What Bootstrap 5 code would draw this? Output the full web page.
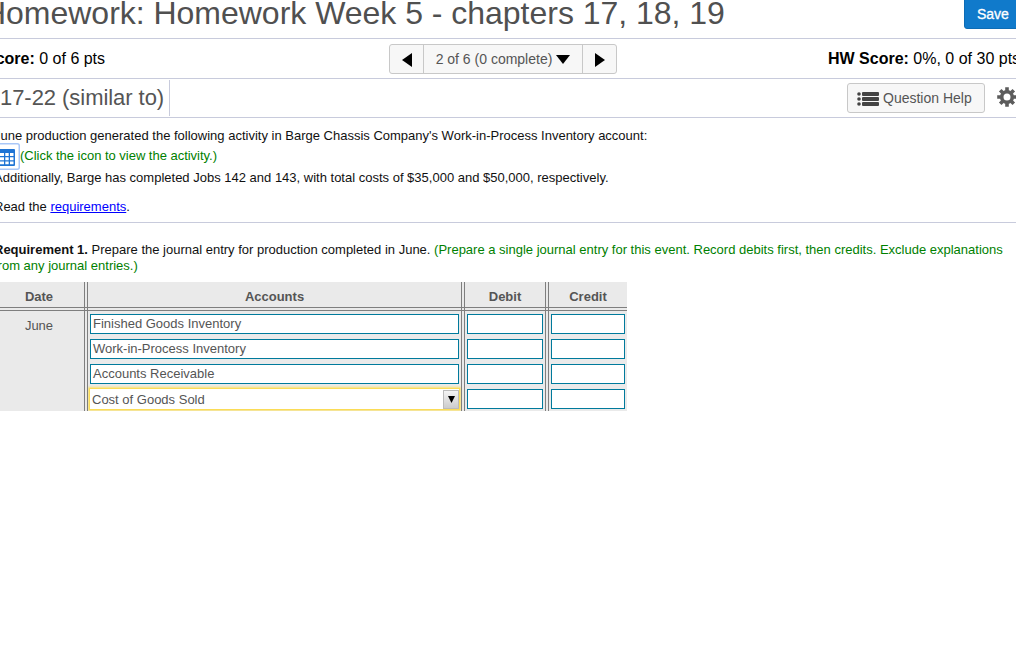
<!DOCTYPE html>
<html lang="en">
<head>
  <meta charset="UTF-8">
  <meta name="viewport" content="width=device-width, initial-scale=1.0">
  <title>Homework Week 5</title>
  <link href="https://cdn.jsdelivr.net/npm/bootstrap@5.3.0/dist/css/bootstrap.min.css" rel="stylesheet">
  <style>
    body {
      font-family: "Liberation Sans", Arial, sans-serif;
      font-size: 13px;
      line-height: 16px;
      color: #111;
      background-color: #fff;
      overflow: hidden;
    }
    /* the page is wider than the window on both sides */
    .hw-page {
      margin-left: -8px;
      width: 1044px;
    }
    .hw-line {
      border-bottom: 1px solid #c8cbdc;
    }
    .title-bar {
      height: 39px;
    }
    .title-bar h1 {
      font-size: 32px;
      line-height: 38px;
      margin-top: -6px;
      margin-left: -9px;
      letter-spacing: -.02px;
      color: #505050;
      font-weight: 400;
    }
    .btn-save {
      width: 80px;
      height: 33px;
      margin-top: -4px;
      margin-right: -8px;
      padding: 4px 0 0 12px;
      text-align: left;
      background-color: #107acb;
      border-color: #0d6cb5;
      border-radius: 3px;
      color: #fff;
      font-size: 14px;
      -webkit-text-stroke: .3px #fff;
    }
    .score-bar {
      height: 40px;
      font-size: 16px;
      color: #000;
    }
    .score-left {
      width: 404px;
      margin-left: -7px;
    }
    .hw-score {
      margin-left: 211px;
    }
    .grey-box {
      background-color: #f7f7f7;
      border: 1px solid #c8c8c8;
      border-radius: 3px;
      color: #555;
      font-size: 14px;
    }
    .pager {
      width: 228px;
      height: 30px;
    }
    .pager svg {
      margin-top: 2px;
    }
    .pager-arrow {
      width: 33px;
    }
    .pager-mid {
      width: 160px;
      border-left: 1px solid #c8c8c8;
      border-right: 1px solid #c8c8c8;
    }
    .question-bar {
      height: 39px;
    }
    .question-name {
      width: 178px;
      height: 36px;
      border-right: 1px solid #c8cbdc;
      font-size: 22px;
      line-height: 35px;
      letter-spacing: -.05px;
      color: #555;
      padding-left: 8px;
    }
    .btn-help {
      width: 138px;
      height: 30px;
      margin-left: 677px;
      padding: 0 0 0 9px;
    }
    .btn-help svg {
      margin-top: 2px;
    }
    .gear {
      margin: 0 0 2px 12px;
    }
    .intro {
      height: 105px;
      padding-top: 10px;
    }
    .intro p, .task p {
      margin: 0 0 0 2px;
      white-space: nowrap;
    }
    .intro .hint {
      margin-left: 0;
      letter-spacing: -.02px;
    }
    .data-icon {
      display: block;
      margin: -1px 0 0 5px;
    }
    .intro .read-line {
      margin-top: 13px;
    }
    .hint {
      color: #008000;
    }
    .intro a {
      color: #00f;
    }
    .task {
      padding-top: 19px;
      height: 59px;
    }
    .journal-wrap {
      height: 129px;
      overflow: hidden;
    }
    .journal {
      width: 635px;
      table-layout: fixed;
      border-collapse: collapse;
      background-color: #eaeaea;
      color: #555;
    }
    .journal th, .journal td {
      padding: 0;
      border: 0 double #7f7f7f;
    }
    .journal th {
      height: 27px;
      padding-top: 5px;
      text-align: center;
      border-bottom-width: 4px;
    }
    .journal th:first-child {
      padding-left: 2px;
    }
    .journal th:not(:last-child), .journal td:not(:last-child) {
      border-right-width: 4px;
    }
    .journal td {
      height: 25px;
      vertical-align: top;
    }
    .journal .date-cell {
      padding: 7px 0 0 2px;
      text-align: center;
    }
    .entry-box {
      height: 20px;
      margin: 3px 2px 2px;
      border: 1px solid #007a9c;
      background-color: #fff;
      padding-left: 2px;
      line-height: 18px;
    }
    .entry-open {
      height: 22px;
      margin: 2px 1px -1px 1px;
      border: 1px solid #fbdc56;
      box-shadow: 0 0 2px 1px #fbe26e;
      padding-left: 2px;
      line-height: 20px;
    }
    .entry-open span:first-child {
      padding-top: 2px;
    }
    .entry-arrow {
      width: 16px;
      height: 19px;
      border: 1px solid #bbb;
      background: linear-gradient(#f4f4f4, #ccc);
    }
  </style>
</head>
<body>
  <div class="hw-page">
    <header class="title-bar hw-line d-flex justify-content-between align-items-start">
      <h1 class="mb-0 text-nowrap">Homework: Homework Week 5 - chapters 17, 18, 19</h1>
      <button class="btn btn-save flex-shrink-0">Save</button>
    </header>

    <div class="score-bar hw-line d-flex align-items-center">
      <div class="score-left"><b>Score:</b> 0 of 6 pts</div>
      <div class="pager grey-box d-flex">
        <div class="pager-arrow d-flex align-items-center justify-content-center">
          <svg width="10" height="14"><path d="M10 0v14L0 7z"/></svg>
        </div>
        <div class="pager-mid d-flex align-items-center justify-content-center gap-1">
          <span>2 of 6 (0 complete)</span>
          <svg width="14" height="9"><path d="M0 0h14L7 9z"/></svg>
        </div>
        <div class="pager-arrow d-flex align-items-center justify-content-center">
          <svg width="10" height="14"><path d="M0 0v14l10-7z"/></svg>
        </div>
      </div>
      <div class="hw-score text-nowrap"><b>HW Score:</b> 0%, 0 of 30 pts</div>
    </div>

    <div class="question-bar hw-line d-flex align-items-center">
      <div class="question-name text-nowrap">17-22 (similar to)</div>
      <div class="btn-help grey-box d-flex align-items-center">
        <svg width="22" height="14" fill="#444">
          <circle cx="2" cy="2" r="1.8"/><circle cx="2" cy="7" r="1.8"/><circle cx="2" cy="12" r="1.8"/>
          <rect x="5" y="0" width="17" height="4" rx="1"/>
          <rect x="5" y="5" width="17" height="4" rx="1"/>
          <rect x="5" y="10" width="17" height="4" rx="1"/>
        </svg>
        <span class="ms-1">Question Help</span>
      </div>
      <svg class="gear" width="20" height="20" viewBox="-10 -10 20 20">
        <circle r="5.3" fill="none" stroke="#5c5c5c" stroke-width="3.6"/>
        <path d="M0-9.8V-6M0 9.8V6M-9.8 0H-6M9.8 0H6M-6.8-6.8l2.6 2.6M6.8 6.8 4.2 4.2M6.8-6.8 4.2-4.2M-6.8 6.8l2.6-2.6" stroke="#5c5c5c" stroke-width="3.6"/>
      </svg>
    </div>

    <section class="intro hw-line">
      <p>June production generated the following activity in Barge Chassis Company's Work-in-Process Inventory account:</p>
      <div class="d-flex">
        <svg class="data-icon" width="23" height="27">
          <rect x=".75" y=".75" width="21.5" height="25.5" rx="2" fill="#fff" stroke="#a9c7f8" stroke-width="1.5"/>
          <rect x="1" y="6" width="17" height="17" rx="1" fill="#1f74d4"/>
          <path d="M3 10h4v3H3zM8.3 10h3.4v3H8.3zM13 10h3.5v3H13zM3 14.3h4v3H3zM8.3 14.3h3.4v3H8.3zM13 14.3h3.5v3H13zM3 18.5h4v2.8H3zM8.3 18.5h3.4v2.8H8.3zM13 18.5h3.5v2.8H13z" fill="#fff"/>
        </svg>
        <p class="hint pt-1">(Click the icon to view the activity.)</p>
      </div>
      <p>Additionally, Barge has completed Jobs 142 and 143, with total costs of $35,000 and $50,000, respectively.</p>
      <p class="read-line">Read the <a href="#">requirements</a>.</p>
    </section>

    <section class="task">
      <p><b>Requirement 1.</b> Prepare the journal entry for production completed in June. <span class="hint">(Prepare a single journal entry for this event. Record debits first, then credits. Exclude explanations<br>from any journal entries.)</span></p>
    </section>

    <div class="journal-wrap">
      <table class="journal">
        <colgroup>
          <col style="width: 94px"><col style="width: 377px"><col style="width: 84px"><col style="width: 80px">
        </colgroup>
        <thead>
          <tr><th>Date</th><th>Accounts</th><th>Debit</th><th>Credit</th></tr>
        </thead>
        <tbody>
          <tr>
            <td rowspan="4" class="date-cell">June</td>
            <td><div class="entry-box">Finished Goods Inventory</div></td>
            <td><div class="entry-box"></div></td>
            <td><div class="entry-box"></div></td>
          </tr>
          <tr>
            <td><div class="entry-box">Work-in-Process Inventory</div></td>
            <td><div class="entry-box"></div></td>
            <td><div class="entry-box"></div></td>
          </tr>
          <tr>
            <td><div class="entry-box">Accounts Receivable</div></td>
            <td><div class="entry-box"></div></td>
            <td><div class="entry-box"></div></td>
          </tr>
          <tr>
            <td>
              <div class="entry-box entry-open d-flex justify-content-between align-items-center">
                <span>Cost of Goods Sold</span>
                <span class="entry-arrow d-flex align-items-center justify-content-center"><svg width="7" height="7"><path d="M0 0h7L3.5 7z"/></svg></span>
              </div>
            </td>
            <td><div class="entry-box"></div></td>
            <td><div class="entry-box"></div></td>
          </tr>
        </tbody>
      </table>
    </div>
  </div>
  <script src="https://cdn.jsdelivr.net/npm/bootstrap@5.3.0/dist/js/bootstrap.bundle.min.js"></script>
</body>
</html>
